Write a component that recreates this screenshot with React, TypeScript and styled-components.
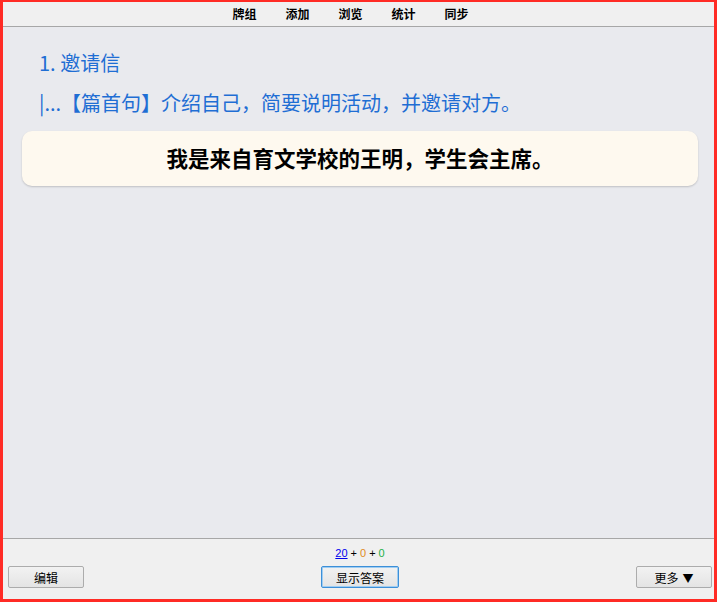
import React from 'react';
import styled, { createGlobalStyle } from 'styled-components';

const GlobalStyle = createGlobalStyle`
  html, body {
    margin: 0;
    padding: 0;
    background: #ffffff;
  }
  body {
    font-family: "Liberation Sans", "Noto Sans CJK SC", sans-serif;
  }
`;

const Frame = styled.div`
  width: 717px;
  height: 602px;
  box-sizing: border-box;
  border: 3px solid #ff2b25;
  border-top-width: 2px;
  display: flex;
  flex-direction: column;
  background: #e9eaee;
`;

const Toolbar = styled.div`
  height: 24px;
  flex: none;
  background: #f0f0f0;
  border-bottom: 1px solid #a7a7a7;
  display: flex;
  justify-content: center;
  align-items: center;
  padding-right: 16px;
  gap: 29px;
`;

const ToolLink = styled.a`
  font-family: "Noto Sans CJK SC", sans-serif;
  font-size: 12px;
  font-weight: 700;
  color: #000;
  text-decoration: none;
  line-height: 16px;
`;

const Main = styled.div`
  flex: 1;
  padding: 16px 16px 0 19px;
  display: flex;
  flex-direction: column;
`;

const Line = styled.div`
  font-family: "Noto Sans CJK SC", sans-serif;
  font-size: 20px;
  color: #1f6ed4;
  padding-left: 17px;
  line-height: 40px;
`;

const Card = styled.div`
  margin-top: 8px;
  height: 55px;
  box-sizing: border-box;
  background: #fef9ef;
  border-radius: 10px;
  box-shadow: 0 1px 2px rgba(0, 0, 0, 0.18);
  display: flex;
  align-items: center;
  justify-content: center;
  font-family: "Noto Sans CJK SC", sans-serif;
  font-weight: 700;
  font-size: 21.5px;
  color: #000;
  padding-bottom: 2px;
`;

const Footer = styled.div`
  height: 60px;
  flex: none;
  background: #f0f0f0;
  border-top: 1px solid #a7a7a7;
  display: flex;
  flex-direction: column;
  padding: 0 2px 0 5px;
`;

const Counts = styled.div`
  height: 27px;
  display: flex;
  justify-content: center;
  align-items: center;
  font-family: "Liberation Sans", sans-serif;
  font-size: 11px;
  color: #000;
  gap: 3px;
`;

const Count = styled.span<{ tone: string; link?: boolean }>`
  color: ${p => p.tone};
  text-decoration: ${p => (p.link ? 'underline' : 'none')};
`;

const ButtonRow = styled.div`
  display: flex;
  justify-content: space-between;
  align-items: center;
`;

const Button = styled.button<{ focused?: boolean }>`
  width: 76px;
  height: 22px;
  box-sizing: border-box;
  padding: 0;
  font-family: "Noto Sans CJK SC", sans-serif;
  font-size: 12px;
  color: #000;
  border: 1px solid ${p => (p.focused ? '#3c8fd8' : '#acacac')};
  box-shadow: ${p => (p.focused ? 'inset 0 0 0 1px #9fcdf2' : 'none')};
  border-radius: 2px;
  background: linear-gradient(#f2f2f2, #e4e4e4);
`;

const Caret = styled.span`
  font-size: 11px;
  margin-left: 4px;
`;

export default function App() {
  return (
    <>
      <GlobalStyle />
      <Frame>
        <Toolbar>
          <ToolLink>牌组</ToolLink>
          <ToolLink>添加</ToolLink>
          <ToolLink>浏览</ToolLink>
          <ToolLink>统计</ToolLink>
          <ToolLink>同步</ToolLink>
        </Toolbar>
        <Main>
          <Line>1. 邀请信</Line>
          <Line>|...【篇首句】介绍自己，简要说明活动，并邀请对方。</Line>
          <Card>我是来自育文学校的王明，学生会主席。</Card>
        </Main>
        <Footer>
          <Counts>
            <Count tone="#0000ee" link>20</Count>
            <span>+</span>
            <Count tone="#e08a1e">0</Count>
            <span>+</span>
            <Count tone="#22b04a">0</Count>
          </Counts>
          <ButtonRow>
            <Button>编辑</Button>
            <Button focused style={{ width: 78 }}>显示答案</Button>
            <Button>更多<Caret>▼</Caret></Button>
          </ButtonRow>
        </Footer>
      </Frame>
    </>
  );
}
